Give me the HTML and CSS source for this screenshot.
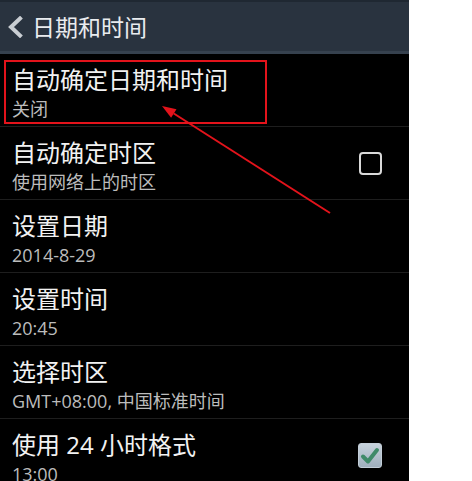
FILE: index.html
```html
<!DOCTYPE html>
<html lang="zh-CN">
<head>
<meta charset="utf-8">
<title>日期和时间</title>
<link rel="stylesheet" href="styles.css">
</head>
<body>
<div class="page">
  <div class="screen">
    <div class="header">
      <svg class="back" width="16" height="22" viewBox="0 0 16 22"><polyline points="13,2.5 4,11 13,19.5" fill="none" stroke="#c9ced3" stroke-width="4" stroke-linecap="square"/></svg>
      <span class="header-title">日期和时间</span>
    </div>
    <div class="row">
      <div class="text">
        <div class="title">自动确定日期和时间</div>
        <div class="sub">关闭</div>
      </div>
    </div>
    <div class="row">
      <div class="text">
        <div class="title">自动确定时区</div>
        <div class="sub">使用网络上的时区</div>
      </div>
      <div class="check"></div>
    </div>
    <div class="row">
      <div class="text">
        <div class="title">设置日期</div>
        <div class="sub">2014-8-29</div>
      </div>
    </div>
    <div class="row">
      <div class="text">
        <div class="title">设置时间</div>
        <div class="sub">20:45</div>
      </div>
    </div>
    <div class="row">
      <div class="text">
        <div class="title">选择时区</div>
        <div class="sub">GMT+08:00, 中国标准时间</div>
      </div>
    </div>
    <div class="row">
      <div class="text">
        <div class="title">使用 24 小时格式</div>
        <div class="sub">13:00</div>
      </div>
      <div class="check checked">
        <svg width="24" height="25" viewBox="0 0 24 25"><polyline points="5,13.5 10,18.5 19,7" fill="none" stroke="#3f8a69" stroke-width="4" stroke-linecap="round" stroke-linejoin="round"/></svg>
      </div>
    </div>
  </div>
  <div class="highlight"></div>
  <svg class="arrow" width="472" height="481" viewBox="0 0 472 481">
    <line x1="330" y1="213" x2="173.8" y2="113.5" stroke="#e3131b" stroke-width="2"/>
    <polygon points="162,106 176.5,109.3 171.1,117.7" fill="#e3131b"/>
  </svg>
</div>
</body>
</html>
```

FILE: styles.css
```css
html, body {
  margin: 0;
  padding: 0;
  background: #ffffff;
}
.page {
  position: relative;
  width: 472px;
  height: 481px;
  overflow: hidden;
  font-family: "Open Sans", "Noto Sans CJK SC", sans-serif;
}
.screen {
  width: 409px;
  height: 481px;
  background: #000000;
  overflow: hidden;
}
.header {
  box-sizing: border-box;
  height: 54px;
  background: #29333f;
  border-top: 2px solid #1f2832;
  border-bottom: 3px solid #36414e;
  display: flex;
  align-items: center;
  padding-left: 7px;
  gap: 9px;
}
.back {
  display: block;
  flex: none;
}
.header-title {
  color: #e9ecef;
  font-size: 23px;
  line-height: 30px;
}
.row {
  box-sizing: border-box;
  height: 73px;
  border-bottom: 1px solid #1e1e1e;
  display: flex;
  align-items: center;
  justify-content: space-between;
  padding: 0 27px 0 12px;
}
.text {
  display: flex;
  flex-direction: column;
  padding-top: 10px;
  padding-bottom: 4px;
}
.title {
  color: #f2f2f2;
  font-size: 24px;
  line-height: 32px;
  white-space: nowrap;
}
.sub {
  color: #bcbcbc;
  font-size: 18px;
  line-height: 26px;
  white-space: nowrap;
}
.check {
  box-sizing: border-box;
  width: 23px;
  height: 23px;
  border: 2.5px solid #d9d9d9;
  border-radius: 4px;
  flex: none;
}
.check.checked {
  width: 24px;
  height: 25px;
  border: 1px solid #c3ced8;
  border-radius: 3px;
  background: linear-gradient(#c7d2dc, #9fafbd);
  position: relative;
}
.check.checked svg {
  position: absolute;
  left: -1px;
  top: -1px;
}
.highlight {
  position: absolute;
  left: 4px;
  top: 60px;
  width: 263px;
  height: 64px;
  box-sizing: border-box;
  border: 2px solid #e3131b;
}
.arrow {
  position: absolute;
  left: 0;
  top: 0;
  pointer-events: none;
}
```
